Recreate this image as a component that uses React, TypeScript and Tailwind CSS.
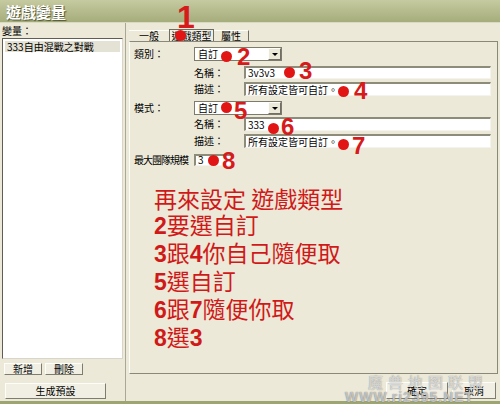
import type { ReactNode } from 'react';

// Classic XP-style "game variables" dialog with red hand-drawn notes on top.

const ui = "font-['Noto_Sans_CJK_TC','Noto_Sans',sans-serif]";

function Sunken({ className = '', children }: { className?: string; children?: ReactNode }) {
  return (
    <div
      className={`bg-white border-t-2 border-l-2 border-b border-r border-t-[#8d8b7a] border-l-[#8d8b7a] border-b-[#f4f3ee] border-r-[#f4f3ee] flex items-center pl-[2px] text-[10px] leading-none text-black ${className}`}
    >
      {children}
    </div>
  );
}

function Combo({ value }: { value: string }) {
  return (
    <div className="w-[88px] h-[14px] bg-white border border-[#7d7b6c] flex items-stretch">
      <span className="flex-1 pl-[3px] text-[10px] leading-[12px]">{value}</span>
      <span className="w-[13px] bg-[#ece9d8] border-l border-t border-[#fdfdfb] border-r border-b border-r-[#716f64] border-b-[#716f64] flex items-center justify-center">
        <span className="w-0 h-0 border-l-[3px] border-r-[3px] border-t-[3px] border-l-transparent border-r-transparent border-t-black" />
      </span>
    </div>
  );
}

function Btn({ className = '', children }: { className?: string; children: ReactNode }) {
  return (
    <div
      className={`bg-[#f1efe4] border border-t-[#fdfdf9] border-l-[#fdfdf9] border-b-[#7e7c6f] border-r-[#7e7c6f] flex items-center justify-center text-[10px] leading-none ${className}`}
    >
      {children}
    </div>
  );
}

function Dot({ x, y }: { x: number; y: number }) {
  return (
    <span
      className="absolute w-[11px] h-[11px] rounded-full bg-[#e21515]"
      style={{ left: x - 5.5, top: y - 5.5 }}
    />
  );
}

function Num({ n, x, y, big }: { n: string; x: number; y: number; big?: boolean }) {
  return (
    <span
      className={`absolute font-['Liberation_Sans',sans-serif] font-bold leading-none text-[#d71a1a] ${big ? 'text-[32px]' : 'text-[24px]'}`}
      style={{ left: x, top: y }}
    >
      {n}
    </span>
  );
}

const notes = [
  '再來設定 遊戲類型',
  '2要選自訂',
  '3跟4你自己隨便取',
  '5選自訂',
  '6跟7隨便你取',
  '8選3',
];

export default function App() {
  return (
    <div className={`relative w-[500px] h-[404px] overflow-hidden bg-[#ece9d8] flex flex-col text-black ${ui}`}>
      {/* title bar */}
      <div className="h-[23px] bg-gradient-to-b from-[#c6caa0] to-[#a6ad7c] border-b border-[#d9dbc0] flex items-center pl-[6px]">
        <span className="text-white font-bold text-[15px] leading-none [text-shadow:1px_1px_1px_#4d5230]">遊戲變量</span>
      </div>

      <div className="flex flex-1 min-h-0">
        {/* variable list */}
        <div className="w-[125px] flex flex-col pl-[2px] pt-[2px]">
          <div className="text-[10px] leading-[11px] h-[11px]">變量：</div>
          <div className="mt-[2px] h-[321px] w-[121px] bg-white border border-[#5f5e55] border-r-[#d8d6cb] border-b-[#d8d6cb] p-[2px]">
            <div className="bg-[#e4e1d5] h-[11px] text-[10px] leading-[11px] pl-[2px]">333自由混戰之對戰</div>
          </div>
          <div className="mt-[4px] flex gap-[3px] pl-[2px]">
            <Btn className="w-[38px] h-[12px]">新增</Btn>
            <Btn className="w-[38px] h-[12px]">刪除</Btn>
          </div>
          <Btn className="mt-[8px] ml-[3px] w-[101px] h-[16px]">生成預設</Btn>
        </div>

        {/* editor */}
        <div className="flex-1 flex flex-col pl-[3px] pr-[2px] border-l border-[#a9a796]">
          <div className="h-[18px] flex items-end text-[10px] leading-none">
            <div className="w-[40px] h-[11px] flex items-center justify-center border-t border-[#fdfdf9]">一般</div>
            <div className="w-[45px] h-[12px] flex items-center justify-center border border-b-0 border-[#6f6d60] bg-[#f1efe4]">遊戲類型</div>
            <div className="w-[35px] h-[11px] flex items-center justify-center border-t border-r border-t-[#fdfdf9] border-r-[#6f6d60]">屬性</div>
          </div>
          <div className="h-[333px] border border-t-[#8a8878] border-l-[#fdfdf9] border-r-[#8a8878] border-b-[#8a8878] flex flex-col pl-[4px] pt-[5px] text-[10px] leading-none">
            <div className="h-[14px] flex items-center">
              <span className="w-[60px]">類別：</span>
              <Combo value="自訂" />
            </div>
            <div className="mt-[5px] h-[13px] flex items-center">
              <span className="ml-[60px] w-[50px]">名稱：</span>
              <Sunken className="w-[247px] h-[13px]">3v3v3</Sunken>
            </div>
            <div className="mt-[3px] h-[14px] flex items-center">
              <span className="ml-[60px] w-[50px]">描述：</span>
              <Sunken className="w-[247px] h-[14px]">所有設定皆可自訂。</Sunken>
            </div>
            <div className="mt-[5px] h-[14px] flex items-center">
              <span className="w-[60px]">模式：</span>
              <Combo value="自訂" />
            </div>
            <div className="mt-[2px] h-[14px] flex items-center">
              <span className="ml-[60px] w-[50px]">名稱：</span>
              <Sunken className="w-[247px] h-[14px]">333</Sunken>
            </div>
            <div className="mt-[3px] h-[14px] flex items-center">
              <span className="ml-[60px] w-[50px]">描述：</span>
              <Sunken className="w-[247px] h-[14px]">所有設定皆可自訂。</Sunken>
            </div>
            <div className="mt-[6px] h-[11px] flex items-center">
              <span className="w-[60px] tracking-[-1px]">最大團隊規模</span>
              <Sunken className="w-[40px] h-[12px]">3</Sunken>
            </div>

            <div className="mt-[20px] ml-[20px] text-[#d01919] text-[23px] leading-[26px] font-['Noto_Sans_CJK_TC',sans-serif]">
              {notes.map((line) => (
                <div key={line}>
                  {line.split(/(\d)/).map((part, i) =>
                    /\d/.test(part) ? (
                      <span key={i} className="font-['Liberation_Sans',sans-serif] font-bold">{part}</span>
                    ) : (
                      <span key={i}>{part}</span>
                    )
                  )}
                </div>
              ))}
            </div>
          </div>
          <div className="mt-[8px] flex justify-end gap-[4px] pr-[2px]">
            <Btn className="w-[62px] h-[17px] border-black">確定</Btn>
            <Btn className="w-[44px] h-[17px]">取消</Btn>
          </div>
        </div>
      </div>
      <div className="h-[3px] bg-[#9da673]" />

      {/* annotations */}
      <Num n="1" x={177} y={1} big />
      <Dot x={180} y={35} />
      <Dot x={226} y={56} />
      <Num n="2" x={237} y={45} />
      <Dot x={289} y={72} />
      <Num n="3" x={299} y={59} />
      <Dot x={343} y={91} />
      <Num n="4" x={354} y={79} />
      <Dot x={226} y={107} />
      <Num n="5" x={234} y={99} />
      <Dot x={273} y={128} />
      <Num n="6" x={281} y={115} />
      <Dot x={343} y={144} />
      <Num n="7" x={352} y={134} />
      <Dot x={213} y={160} />
      <Num n="8" x={222} y={149} />

      {/* site watermark */}
      <div className="absolute left-[368px] top-[374px] text-[15px] leading-none tracking-[5px] text-white/70 [text-shadow:0_0_1px_#6b6b6b]">
        魔兽地图联盟
      </div>
      <div className="absolute left-[345px] top-[390px] text-[14px] leading-none font-bold tracking-[1px] text-white/60 [text-shadow:0_0_1px_#555] font-['Liberation_Sans',sans-serif]">
        WWW.ri2395.NET
      </div>
    </div>
  );
}
